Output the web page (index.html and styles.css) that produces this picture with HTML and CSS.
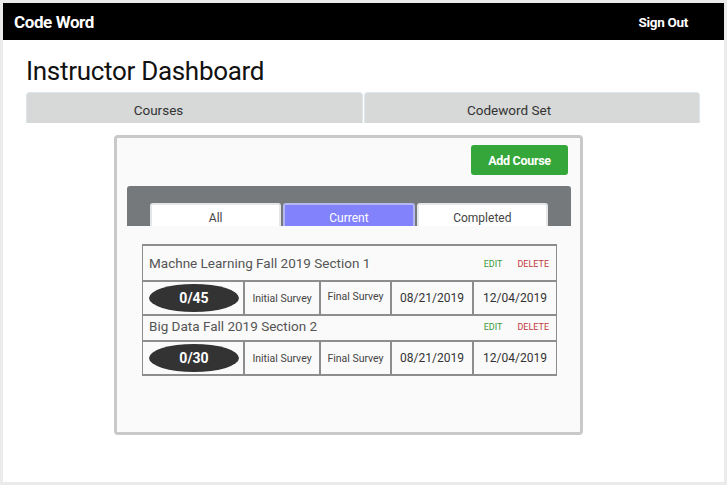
FILE: index.html
```html
<!DOCTYPE html>
<html>
<head>
<meta charset="utf-8">
<link rel="stylesheet" href="styles.css">
</head>
<body>
<div class="frame">
  <header class="topbar">
    <span class="brand">Code Word</span>
    <span class="signout">Sign Out</span>
  </header>
  <h1 class="title">Instructor Dashboard</h1>
  <nav class="maintabs">
    <div class="maintab courses">Courses</div>
    <div class="maintab codeword">Codeword Set</div>
  </nav>
  <section class="card">
    <div class="actions"><button class="add">Add Course</button></div>
    <div class="filterbar">
      <div class="ftab">All</div>
      <div class="ftab active">Current</div>
      <div class="ftab">Completed</div>
    </div>
    <div class="table">
      <div class="course-title first">
        <span class="name">Machne Learning Fall 2019 Section 1</span>
        <span class="links"><span class="edit">EDIT</span><span class="delete">DELETE</span></span>
      </div>
      <div class="course-row">
        <div class="cell"><span class="pill">0/45</span></div>
        <div class="cell small">Initial Survey</div>
        <div class="cell small up">Final Survey</div>
        <div class="cell date">08/21/2019</div>
        <div class="cell date">12/04/2019</div>
      </div>
      <div class="course-title">
        <span class="name">Big Data Fall 2019 Section 2</span>
        <span class="links"><span class="edit">EDIT</span><span class="delete">DELETE</span></span>
      </div>
      <div class="course-row last">
        <div class="cell"><span class="pill">0/30</span></div>
        <div class="cell small">Initial Survey</div>
        <div class="cell small">Final Survey</div>
        <div class="cell date">08/21/2019</div>
        <div class="cell date">12/04/2019</div>
      </div>
    </div>
  </section>
</div>
</body>
</html>
```
FILE: styles.css
```css
html, body {
  margin: 0;
  padding: 0;
}
body {
  background: #ebebeb;
  font-family: Roboto, "Liberation Sans", sans-serif;
  width: 727px;
  height: 485px;
  overflow: hidden;
}
.frame {
  margin: 3px 0 0 3px;
  width: 721px;
  height: 479px;
  background: #ffffff;
  overflow: hidden;
}
.topbar {
  height: 37px;
  background: #000;
  color: #fff;
  display: flex;
  align-items: center;
  justify-content: space-between;
  padding: 0 36px 0 11px;
}
.brand {
  font-size: 17px;
  font-weight: 700;
  letter-spacing: -0.4px;
}
.signout {
  font-size: 13.5px;
  font-weight: 700;
  letter-spacing: -0.3px;
}
.title {
  margin: 14px 0 4px 23px;
  font-size: 26px;
  font-weight: 400;
  line-height: 34px;
  color: #111;
  letter-spacing: -0.3px;
}
.maintabs {
  display: grid;
  grid-template-columns: 337px 1fr;
  gap: 1px;
  margin: 0 24px 0 23px;
}
.maintab {
  height: 31px;
  box-sizing: border-box;
  background: #d7d8d8;
  border: 1px solid #dde6ea;
  border-bottom: none;
  border-radius: 4px 4px 0 0;
  font-size: 13.5px;
  color: #333;
  text-align: center;
  padding-top: 9px;
}
.maintab.courses {
  padding-right: 72px;
}
.maintab.codeword {
  padding-right: 46px;
}
.card {
  margin: 12px 0 0 111px;
  width: 469px;
  height: 300px;
  box-sizing: border-box;
  border: 3px solid #c9c9c9;
  border-radius: 4px;
  background: #fafafa;
}
.actions {
  display: flex;
  justify-content: flex-end;
  padding: 7px 12px 0 0;
}
.add {
  width: 97px;
  height: 30px;
  border: none;
  border-radius: 3px;
  background: #35a73a;
  color: #fff;
  font-family: Roboto, "Liberation Sans", sans-serif;
  font-weight: 700;
  font-size: 12.5px;
  letter-spacing: -0.3px;
  padding: 0;
}
.filterbar {
  margin: 11px 9px 0 10px;
  height: 40px;
  box-sizing: border-box;
  background: #76797b;
  border-radius: 3px 3px 0 0;
  display: flex;
  align-items: flex-end;
  gap: 2px;
  padding: 0 23px;
}
.ftab {
  flex: 1;
  height: 23px;
  box-sizing: border-box;
  background: #fff;
  border: 2px solid #e4e6e8;
  border-bottom: none;
  border-radius: 3px 3px 0 0;
  font-size: 12px;
  color: #444;
  text-align: center;
  padding-top: 6px;
}
.ftab.active {
  background: #8282fc;
  border-color: #b3b9f0;
  color: #fff;
}
.table {
  margin: 18px 0 0 25px;
  width: 415px;
  border: 1px solid #8d8d8d;
  border-top-width: 2px;
  border-bottom-width: 2px;
  box-sizing: border-box;
}
.course-title {
  height: 24px;
  box-sizing: border-box;
  display: flex;
  align-items: center;
  justify-content: space-between;
  padding: 0 7px 4px 6px;
  color: #555;
}
.course-title.first {
  height: 34px;
  padding-bottom: 0;
}
.name {
  font-size: 13.5px;
}
.links {
  display: flex;
  gap: 15px;
  font-size: 9px;
  padding-top: 2px;
}
.edit { color: #3a9a3a; }
.delete { color: #c23a3a; }
.course-row {
  display: grid;
  grid-template-columns: 100px 76px 71px 82px 1fr;
  height: 36px;
  border-top: 2px solid #8d8d8d;
  border-bottom: 2px solid #8d8d8d;
  box-sizing: border-box;
}
.course-row.last {
  border-bottom: none;
  height: 34px;
}
.cell {
  display: flex;
  align-items: center;
  justify-content: center;
  border-left: 2px solid #8d8d8d;
  color: #333;
}
.cell:first-child {
  border-left: none;
}
.small {
  font-size: 10.5px;
  color: #444;
}
.small.up {
  padding-bottom: 3px;
}
.date {
  font-size: 12px;
  color: #333;
}
.pill {
  width: 90px;
  height: 28px;
  margin-left: 2px;
  border-radius: 50%;
  background: #333;
  color: #fff;
  font-weight: 700;
  font-size: 14px;
  display: flex;
  align-items: center;
  justify-content: center;
}
```
